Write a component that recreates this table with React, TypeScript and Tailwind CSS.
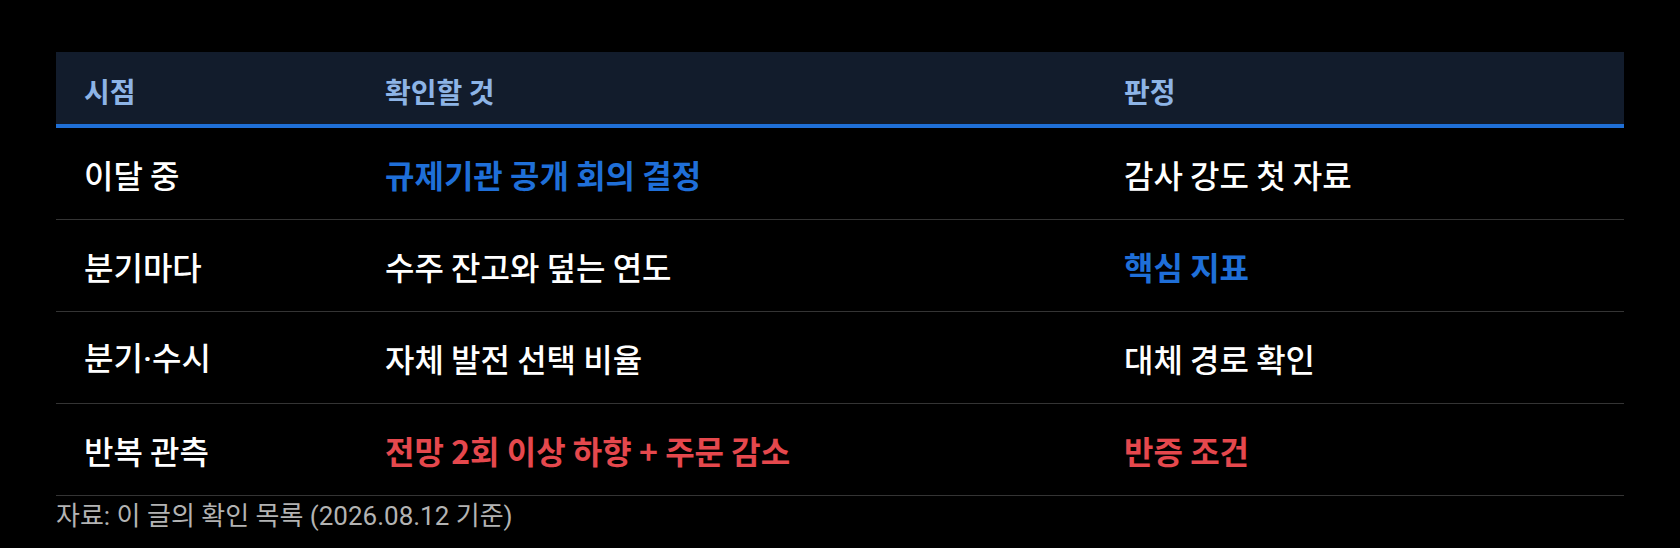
import React from "react";

type Tone = "plain" | "blue" | "red";

const rows: { a: React.ReactNode; b: string; bTone: Tone; c: string; cTone: Tone }[] = [
  { a: "이달 중", b: "규제기관 공개 회의 결정", bTone: "blue", c: "감사 강도 첫 자료", cTone: "plain" },
  { a: "분기마다", b: "수주 잔고와 덮는 연도", bTone: "plain", c: "핵심 지표", cTone: "blue" },
  {
    a: (
      <>
        분기<span style={{ fontFamily: 'Roboto, sans-serif' }}>·</span>수시
      </>
    ),
    b: "자체 발전 선택 비율",
    bTone: "plain",
    c: "대체 경로 확인",
    cTone: "plain",
  },
  { a: "반복 관측", b: "전망 2회 이상 하향 + 주문 감소", bTone: "red", c: "반증 조건", cTone: "red" },
];

function toneClass(t: Tone) {
  if (t === "blue") return "text-[#1f6fd8] font-bold";
  if (t === "red") return "text-[#e5484d] font-bold";
  return "text-white font-medium";
}

export default function App() {
  return (
    <div
      className="min-h-[548px] w-full bg-black px-[56px] pt-[52px]"
      style={{ fontFamily: '"Noto Sans CJK KR", "Noto Sans", sans-serif' }}
    >
      <div className="w-full">
        <div className="grid h-[76px] grid-cols-[301px_739px_1fr] items-center border-b-4 border-[#1f6fd6] bg-[#121c2c] text-[28px] font-bold text-[#8db4e6]">
          <div className="px-[28px] pt-[5px]">시점</div>
          <div className="px-[28px] pt-[5px]">확인할 것</div>
          <div className="px-[28px] pt-[5px]">판정</div>
        </div>
        {rows.map((r, i) => (
          <div
            key={i}
            className="grid h-[92px] grid-cols-[301px_739px_1fr] items-center border-b border-[#343434] text-[32px]"
          >
            <div className="px-[28px] font-medium text-white">{r.a}</div>
            <div className={"px-[28px] " + toneClass(r.bTone)}>{r.b}</div>
            <div className={"px-[28px] " + toneClass(r.cTone)}>{r.c}</div>
          </div>
        ))}
      </div>
      <div
        className="mt-[4px] text-[26px] leading-[32px] text-[#b3b3b3]"
        style={{ fontFamily: 'Roboto, "Noto Sans CJK KR", sans-serif' }}
      >
        자료: 이 글의 확인 목록 (2026.08.12 기준)
      </div>
    </div>
  );
}
